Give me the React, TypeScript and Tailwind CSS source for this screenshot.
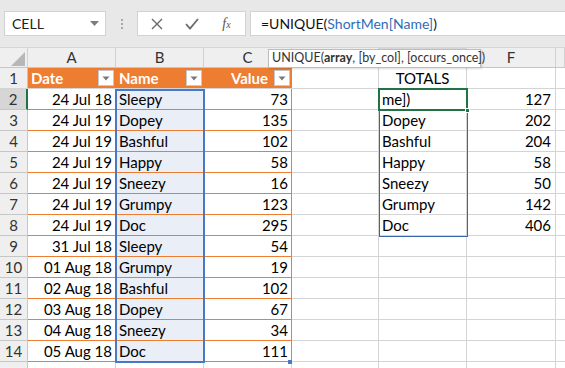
import React from "react";

const COLS = [28, 88, 88, 88, 87, 88, 89, 9];
const LETTERS = ["", "A", "B", "C", "", "", "F", ""];

type Row = { n: number; date: string; name: string; value: string; e?: string; f?: string };

const rows: Row[] = [
  { n: 2, date: "24 Jul 18", name: "Sleepy", value: "73", e: "me])", f: "127" },
  { n: 3, date: "24 Jul 19", name: "Dopey", value: "135", e: "Dopey", f: "202" },
  { n: 4, date: "24 Jul 19", name: "Bashful", value: "102", e: "Bashful", f: "204" },
  { n: 5, date: "24 Jul 19", name: "Happy", value: "58", e: "Happy", f: "58" },
  { n: 6, date: "24 Jul 19", name: "Sneezy", value: "16", e: "Sneezy", f: "50" },
  { n: 7, date: "24 Jul 19", name: "Grumpy", value: "123", e: "Grumpy", f: "142" },
  { n: 8, date: "24 Jul 19", name: "Doc", value: "295", e: "Doc", f: "406" },
  { n: 9, date: "31 Jul 18", name: "Sleepy", value: "54" },
  { n: 10, date: "01 Aug 18", name: "Grumpy", value: "19" },
  { n: 11, date: "02 Aug 18", name: "Bashful", value: "102" },
  { n: 12, date: "03 Aug 18", name: "Dopey", value: "67" },
  { n: 13, date: "04 Aug 18", name: "Sneezy", value: "34" },
  { n: 14, date: "05 Aug 18", name: "Doc", value: "111" },
];

function DropBtn() {
  return (
    <div className="w-[16px] h-[16px] bg-white border border-[#c8c8c8] flex items-center justify-center shrink-0">
      <svg width="8" height="5" viewBox="0 0 8 5">
        <path d="M0.5 0.5 L7.5 0.5 L4 4.5 Z" fill="#7a7a7a" />
      </svg>
    </div>
  );
}

function Cell({
  w,
  children,
  className = "",
}: {
  w: number;
  children?: React.ReactNode;
  className?: string;
}) {
  return (
    <div style={{ width: w }} className={"h-full shrink-0 flex items-center overflow-hidden whitespace-nowrap " + className}>
      {children}
    </div>
  );
}

export default function App() {
  return (
    <div
      className="w-[565px] h-[368px] overflow-hidden bg-white text-[#000] relative"
      style={{ fontFamily: "Lato, 'Liberation Sans', sans-serif" }}
    >
      {/* Formula bar */}
      <div className="h-[48px] bg-[#e8e8e8] flex items-start pt-[11px] pl-[4px] border-b border-[#d6d6d6]">
        <div className="w-[102px] h-[25px] bg-white border border-[#d2d2d2] flex items-center justify-between pl-[7px] pr-[6px]">
          <span className="text-[14px] text-[#222]">CELL</span>
          <svg width="9" height="5" viewBox="0 0 9 5">
            <path d="M0 0 L9 0 L4.5 5 Z" fill="#7d7d7d" />
          </svg>
        </div>
        <div className="w-[31px] h-[25px] flex items-center justify-center">
          <div className="flex flex-col gap-[2px]">
            <div className="w-[2px] h-[2px] bg-[#a8a8a8]" />
            <div className="w-[2px] h-[2px] bg-[#a8a8a8]" />
            <div className="w-[2px] h-[2px] bg-[#a8a8a8]" />
          </div>
        </div>
        <div className="w-[109px] h-[25px] bg-white border border-[#d2d2d2] flex items-center">
          <div className="w-[38px] flex justify-center">
            <svg width="12" height="12" viewBox="0 0 12 12">
              <path d="M1 1 L11 11 M11 1 L1 11" stroke="#6a6a6a" strokeWidth="1.4" />
            </svg>
          </div>
          <div className="w-[32px] flex justify-center">
            <svg width="14" height="12" viewBox="0 0 14 12">
              <path d="M1 6 L5 10.5 L13 1" stroke="#6a6a6a" strokeWidth="1.8" fill="none" />
            </svg>
          </div>
          <div className="flex-1 flex justify-center">
            <span className="text-[14px] italic text-[#555]" style={{ fontFamily: "'Liberation Serif', serif" }}>
              f<span className="text-[10px]">x</span>
            </span>
          </div>
        </div>
        <div className="ml-[4px] flex-1 h-[25px] bg-white border border-[#d2d2d2] border-r-0 flex items-center pl-[10px]">
          <span className="text-[14px] text-[#111]">
            =UNIQUE(<span className="text-[#2f6db5]">ShortMen[Name]</span>)
          </span>
        </div>
      </div>

      {/* Grid */}
      <div className="relative">
        {/* Column header row */}
        <div className="h-[20px] flex bg-[#efefef] border-b border-[#c6c6c6]">
          {COLS.map((w, i) => (
            <Cell
              key={i}
              w={w}
              className={
                "justify-center text-[15px] text-[#333] border-r border-[#d2d2d2] " +
                (i === 5 ? "bg-[#d8d8d8] border-b-2 border-b-[#217346]" : "")
              }
            >
              {i === 0 ? (
                <svg width="14" height="14" viewBox="0 0 14 14" className="ml-[8px] mt-[2px]">
                  <path d="M14 0 L14 14 L0 14 Z" fill="#b7b7b7" />
                </svg>
              ) : (
                LETTERS[i]
              )}
            </Cell>
          ))}
        </div>

        {/* Row 1 */}
        <div className="h-[21px] flex border-b border-[#d4d4d4]">
          <Cell w={28} className="justify-center text-[15px] text-[#333] bg-[#efefef] border-r border-[#c6c6c6]">
            1
          </Cell>
          <Cell w={88} className="bg-[#ed7d31] text-white font-bold text-[15px] pl-[3px] pr-[2px] justify-between">
            <span>Date</span>
            <DropBtn />
          </Cell>
          <Cell w={88} className="bg-[#ed7d31] text-white font-bold text-[15px] pl-[3px] pr-[2px] justify-between">
            <span>Name</span>
            <DropBtn />
          </Cell>
          <Cell w={88} className="bg-[#ed7d31] text-white font-bold text-[15px] pr-[2px] justify-end gap-[6px]">
            <span>Value</span>
            <DropBtn />
          </Cell>
          <Cell w={87} className="border-r border-[#d4d4d4]" />
          <Cell w={88} className="justify-center text-[15px] border-r border-[#d4d4d4]">
            TOTALS
          </Cell>
          <Cell w={89} className="border-r border-[#d4d4d4]" />
          <Cell w={9} />
        </div>

        {rows.map((r) => (
          <div key={r.n} className="h-[21px] flex">
            <Cell
              w={28}
              className={
                "justify-center text-[15px] text-[#333] border-b border-r " +
                (r.n === 2
                  ? "bg-[#d6d6d6] border-b-[#c6c6c6] border-r-2 border-r-[#217346]"
                  : "bg-[#efefef] border-[#c6c6c6]")
              }
            >
              {r.n}
            </Cell>
            <Cell w={88} className="justify-end pr-[4px] text-[15px] border-b border-[#ed7d31]">
              {r.date}
            </Cell>
            <Cell w={88} className="pl-[3px] text-[15px] border-b border-[#ed7d31] bg-[#e9eef7]">
              {r.name}
            </Cell>
            <Cell w={88} className="justify-end pr-[3px] text-[15px] border-b border-r border-[#ed7d31]">
              {r.value}
            </Cell>
            <Cell w={87} className="border-b border-r border-[#d4d4d4]" />
            <Cell w={88} className="pl-[3px] text-[15px] border-b border-r border-[#d4d4d4]">
              {r.e}
            </Cell>
            <Cell w={89} className="justify-end pr-[4px] text-[15px] border-b border-r border-[#d4d4d4]">
              {r.f}
            </Cell>
            <Cell w={9} className="border-b border-[#d4d4d4]" />
          </div>
        ))}
        <div className="h-[21px] flex">
          <Cell w={28} className="bg-[#efefef] border-r border-[#c6c6c6]" />
          <Cell w={88} className="border-r border-[#d4d4d4]" />
          <Cell w={88} className="border-r border-[#d4d4d4]" />
          <Cell w={88} className="border-r border-[#d4d4d4]" />
          <Cell w={87} className="border-r border-[#d4d4d4]" />
          <Cell w={88} className="border-r border-[#d4d4d4]" />
          <Cell w={89} className="border-r border-[#d4d4d4]" />
        </div>

        {/* Selection B2:B14 */}
        <div className="absolute left-[115px] top-[41px] w-[90px] h-[274px] border-2 border-[#4a78c2] pointer-events-none" />
        {/* Spill range E2:E8 */}
        <div className="absolute left-[379px] top-[41px] w-[89px] h-[148px] border border-[#3a66ad] pointer-events-none" />
        {/* Active cell E2 */}
        <div className="absolute left-[378px] top-[40px] w-[90px] h-[23px] border-2 border-[#217346] pointer-events-none" />
        <div className="absolute left-[465px] top-[60px] w-[5px] h-[5px] bg-[#217346] border border-white pointer-events-none" />
        {/* Fill handle on C14 */}
        <div className="absolute left-[288px] top-[312px] w-[4px] h-[4px] bg-[#4a78c2] pointer-events-none" />

        {/* Tooltip */}
        <div className="absolute left-[268px] top-[1px] h-[19px] w-[213px] bg-white border border-[#bdbdbd] shadow-[1px_1px_2px_rgba(0,0,0,0.15)] flex items-center pl-[3px] text-[12.5px] text-[#333] whitespace-nowrap">
          UNIQUE(<b className="font-bold">array</b>, [by_col], [occurs_once])
        </div>
      </div>
    </div>
  );
}
